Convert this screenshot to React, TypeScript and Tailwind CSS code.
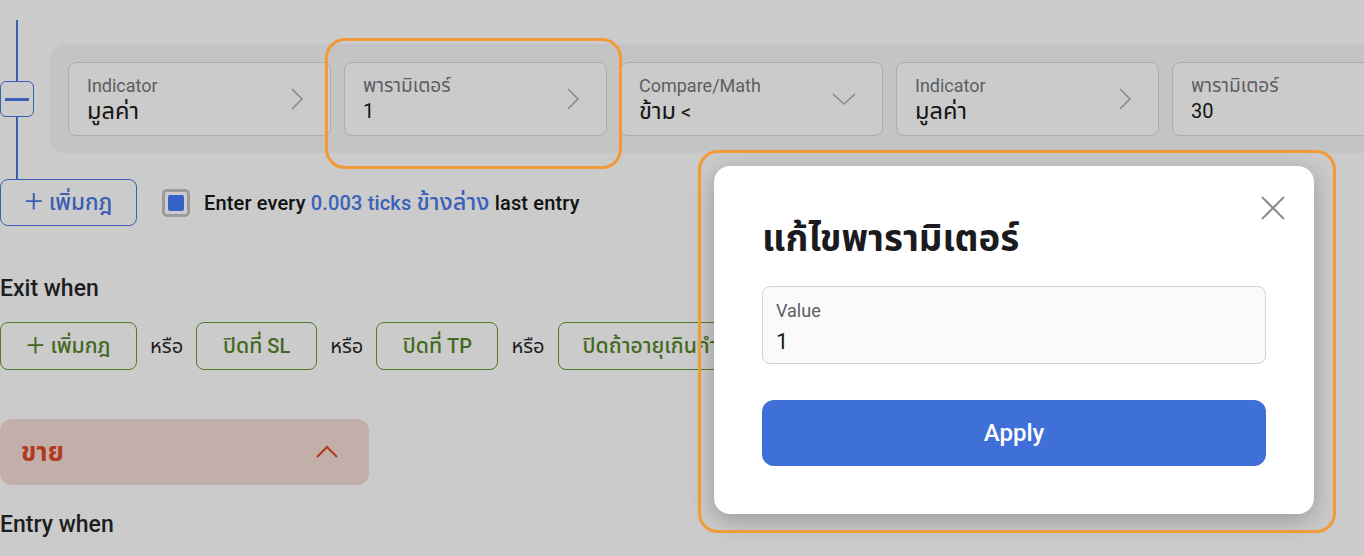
const font = { fontFamily: 'Roboto, "Noto Sans Thai", "Noto Sans Thai Looped", "Noto Sans", "DejaVu Sans", sans-serif' };

function ChevronRight() {
  return (
    <svg width="14" height="24" viewBox="0 0 14 24" fill="none" stroke="#8a8a8a" strokeWidth="1.6">
      <polyline points="2,2 12,12 2,22" />
    </svg>
  );
}

function ChevronDown() {
  return (
    <svg width="24" height="14" viewBox="0 0 24 14" fill="none" stroke="#8a8a8a" strokeWidth="1.6">
      <polyline points="1,2 12,12 23,2" />
    </svg>
  );
}

// Thai glyphs come out a bit small next to Roboto, so bump them
function Th({ children, small }: { children: React.ReactNode; small?: boolean }) {
  return <span className={small ? "text-[1.06em]" : "text-[1.18em]"}>{children}</span>;
}

function Field({ label, value, icon }: { label: React.ReactNode; value: React.ReactNode; icon?: "right" | "down" | "none" }) {
  return (
    <div className="w-[263px] h-[74px] shrink-0 rounded-lg border border-[#adadad] bg-[#cbcbcb] flex items-center justify-between pl-[18px] pr-[26px]">
      <div className="flex flex-col">
        <span className="text-[18px] leading-[24px] text-[#5c5e62]">{label}</span>
        <span className="text-[20px] leading-[26px] text-[#151515]">{value}</span>
      </div>
      {icon === "right" && <ChevronRight />}
      {icon === "down" && <ChevronDown />}
    </div>
  );
}

function GreenChip({ children, className = "" }: { children: React.ReactNode; className?: string }) {
  return (
    <div className={"h-[48px] rounded-lg border border-[#4f7a2a] flex items-center justify-center text-[20px] font-medium text-[#44691f] " + className}>
      {children}
    </div>
  );
}

export default function App() {
  return (
    <div style={font} className="relative w-[1364px] h-[556px] overflow-hidden bg-[#cbcbcb]">
      {/* top rule row */}
      <div className="flex pt-[20px]">
        <div className="w-[34px] flex flex-col items-center shrink-0">
          <div className="w-[2px] h-[61px] bg-[#3b5fb5]" />
          <div className="w-[34px] h-[36px] rounded-md border border-[#3b5fb5] flex items-center justify-center">
            <div className="w-[24px] h-[3px] bg-[#3b5fb5]" />
          </div>
          <div className="w-[2px] h-[62px] bg-[#3b5fb5]" />
        </div>
        <div className="ml-[16px] mt-[24px] h-[109px] w-[1400px] rounded-2xl bg-[#c4c4c4] flex items-start gap-[13px] pl-[18px] pt-[18px]">
          <Field label="Indicator" value={<Th>มูลค่า</Th>} icon="right" />
          <Field label={<Th small>พารามิเตอร์</Th>} value="1" icon="right" />
          <Field label="Compare/Math" value={<><Th>ข้าม</Th> &lt;</>} icon="down" />
          <Field label="Indicator" value={<Th>มูลค่า</Th>} icon="right" />
          <Field label={<Th small>พารามิเตอร์</Th>} value="30" icon="none" />
        </div>
      </div>

      {/* add rule + checkbox */}
      <div className="flex items-center h-[47px]">
        <div className="w-[137px] h-[47px] rounded-lg border border-[#3b5fb5] flex items-center justify-center gap-[6px] text-[#3b5fb5] text-[19px] font-medium">
          <span className="text-[32px] font-light leading-none -mt-[3px]">+</span>
          <Th>เพิ่มกฎ</Th>
        </div>
        <div className="ml-[25px] w-[28px] h-[28px] rounded-[5px] border-[3px] border-[#9b9b9b] flex items-center justify-center">
          <div className="w-[16px] h-[16px] rounded-[2px] bg-[#3560c9]" />
        </div>
        <div className="ml-[14px] text-[20px] font-medium text-[#111] tracking-[0.15px]">
          Enter every <span className="text-[#3a62b8]">0.003 ticks <Th>ข้างล่าง</Th></span> last entry
        </div>
      </div>

      {/* exit when */}
      <div className="mt-[49px] text-[23px] font-medium text-[#1d1d1f] leading-[28px]">Exit when</div>
      <div className="mt-[19px] flex items-center gap-[13px]">
        <GreenChip className="w-[137px] gap-[6px]">
          <span className="text-[32px] font-light leading-none -mt-[3px]">+</span>
          <Th small>เพิ่มกฎ</Th>
        </GreenChip>
        <span className="text-[19px] text-[#1d1d1f]"><Th small>หรือ</Th></span>
        <GreenChip className="w-[121px]"><Th small>ปิดที่</Th>&nbsp;SL</GreenChip>
        <span className="text-[19px] text-[#1d1d1f]"><Th small>หรือ</Th></span>
        <GreenChip className="w-[122px]"><Th small>ปิดที่</Th>&nbsp;TP</GreenChip>
        <span className="text-[19px] text-[#1d1d1f]"><Th small>หรือ</Th></span>
        <GreenChip className="w-[220px] justify-start pl-[24px]"><Th small>ปิดถ้าอายุเกินกำหนด</Th></GreenChip>
      </div>

      {/* sell accordion */}
      <div className="mt-[49px] w-[369px] h-[66px] rounded-xl bg-[#c3afa9] flex items-center justify-between pl-[21px] pr-[30px]">
        <span className="text-[22px] font-bold text-[#b03a20]"><Th>ขาย</Th></span>
        <svg width="24" height="14" viewBox="0 0 24 14" fill="none" stroke="#b03a20" strokeWidth="2">
          <polyline points="2,12 12,2 22,12" />
        </svg>
      </div>
      <div className="mt-[26px] text-[23px] font-medium text-[#1d1d1f] leading-[28px]">Entry when</div>

      {/* annotation: parameter card */}
      <div className="absolute left-[325px] top-[38px] w-[297px] h-[131px] rounded-[20px] border-[3px] border-[#f29a38]" />

      {/* modal */}
      <div className="absolute left-[714px] top-[166px] w-[600px] h-[348px] rounded-2xl bg-white shadow-[0_6px_24px_rgba(0,0,0,0.25)] px-[48px]">
        <svg className="absolute right-[29px] top-[30px]" width="24" height="24" viewBox="0 0 24 24" fill="none" stroke="#8a8d92" strokeWidth="2">
          <line x1="1" y1="1" x2="23" y2="23" />
          <line x1="23" y1="1" x2="1" y2="23" />
        </svg>
        <div className="pt-[51px] text-[31px] font-bold text-[#1b1b1f] leading-[44px]"><Th>แก้ไขพารามิเตอร์</Th></div>
        <div className="mt-[23px] h-[78px] rounded-lg border border-[#d3d3d8] bg-[#fafafa] px-[13px] pt-[13px] flex flex-col">
          <span className="text-[18px] leading-[22px] text-[#5c5e62]">Value</span>
          <span className="mt-[6px] text-[22px] leading-[28px] text-[#1b1b1f]">1</span>
        </div>
        <div className="mt-[36px] h-[66px] rounded-xl bg-[#3e70d7] flex items-center justify-center text-white text-[24px] font-medium">
          Apply
        </div>
      </div>

      {/* annotation: modal */}
      <div className="absolute left-[698px] top-[150px] w-[638px] h-[383px] rounded-[20px] border-[3px] border-[#f29a38]" />
    </div>
  );
}
